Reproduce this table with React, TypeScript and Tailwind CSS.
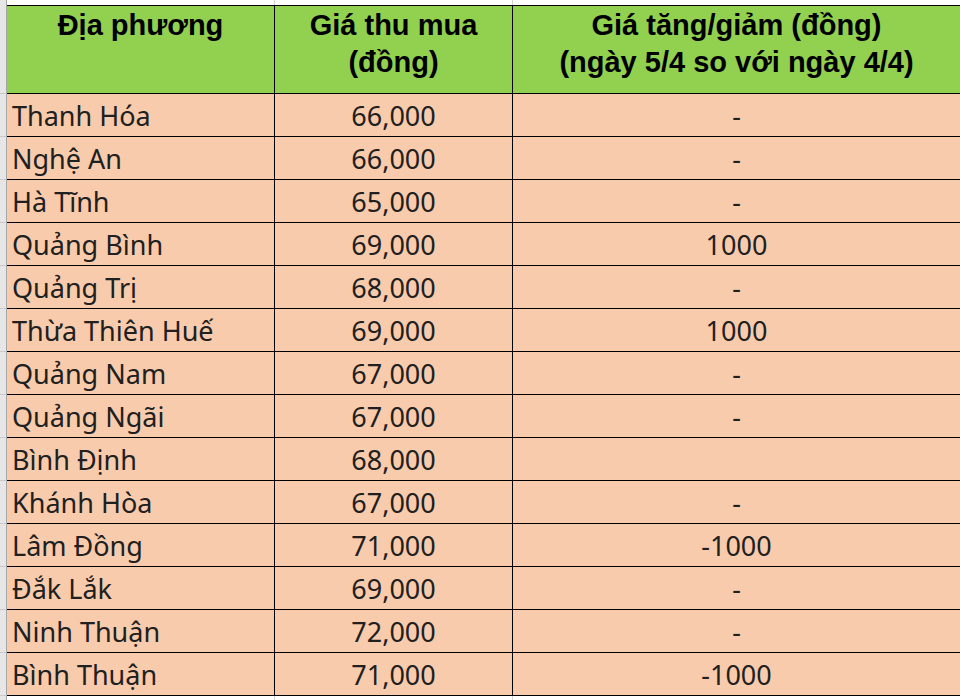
import React from "react";

const rows: [string, string, string][] = [
  ["Thanh Hóa", "66,000", "-"],
  ["Nghệ An", "66,000", "-"],
  ["Hà Tĩnh", "65,000", "-"],
  ["Quảng Bình", "69,000", "1000"],
  ["Quảng Trị", "68,000", "-"],
  ["Thừa Thiên Huế", "69,000", "1000"],
  ["Quảng Nam", "67,000", "-"],
  ["Quảng Ngãi", "67,000", "-"],
  ["Bình Định", "68,000", ""],
  ["Khánh Hòa", "67,000", "-"],
  ["Lâm Đồng", "71,000", "-1000"],
  ["Đắk Lắk", "69,000", "-"],
  ["Ninh Thuận", "72,000", "-"],
  ["Bình Thuận", "71,000", "-1000"],
];

export default function App() {
  return (
    <div className="w-[960px] h-[700px] bg-white overflow-hidden flex flex-col">
      {/* top white gridline row */}
      <div className="flex h-[5px] shrink-0">
        <div className="w-[7px] shrink-0 bg-[#e6e6e6] border-r border-r-[#a6a6a6]" />
        <div className="w-[268px] shrink-0 border-r border-r-[#d4d4d4]" />
        <div className="w-[238px] shrink-0 border-r border-r-[#d4d4d4]" />
        <div className="flex-1" />
      </div>
      {/* header */}
      <div
        className="flex h-[89px] shrink-0 font-bold text-black text-[29px] leading-[37px]"
        style={{ fontFamily: '"Liberation Sans", Arial, sans-serif' }}
      >
        <div className="w-[7px] shrink-0 bg-[#e6e6e6] border-r border-r-[#a6a6a6] border-b border-b-[#c8c8c8]" />
        <div className="flex-1 flex bg-[#92d050] border-t border-b border-black">
          <div className="w-[268px] shrink-0 border-r border-black text-center pt-[1px]">
            Địa phương
          </div>
          <div className="w-[238px] shrink-0 border-r border-black text-center pt-[1px]">
            Giá thu mua
            <br />
            (đồng)
          </div>
          <div className="flex-1 text-center pt-[1px]">
            Giá tăng/giảm (đồng)
            <br />
            (ngày 5/4 so với ngày 4/4)
          </div>
        </div>
      </div>
      {/* body rows */}
      <div
        className="flex flex-col text-[27px] text-[#202020]"
        style={{ fontFamily: '"Noto Sans", "Open Sans", sans-serif' }}
      >
        {rows.map(([a, b, c]) => (
          <div key={a} className="flex h-[43px] shrink-0">
            <div className="w-[7px] shrink-0 bg-[#e6e6e6] border-r border-r-[#a6a6a6] border-b border-b-[#c8c8c8]" />
            <div className="flex-1 flex bg-[#f8cbad] border-b border-black">
              <div className="w-[268px] shrink-0 border-r border-black flex items-center pl-[5px] pt-[3px]">
                {a}
              </div>
              <div className="w-[238px] shrink-0 border-r border-black flex items-center justify-center pt-[3px]">
                {b}
              </div>
              <div className="flex-1 flex items-center justify-center pt-[3px]">
                {c}
              </div>
            </div>
          </div>
        ))}
      </div>
      <div className="flex flex-1">
        <div className="w-[7px] shrink-0 bg-[#e6e6e6] border-r border-r-[#a6a6a6]" />
        <div className="w-[268px] shrink-0 border-r border-r-[#d4d4d4]" />
        <div className="w-[238px] shrink-0 border-r border-r-[#d4d4d4]" />
        <div className="flex-1" />
      </div>
    </div>
  );
}
